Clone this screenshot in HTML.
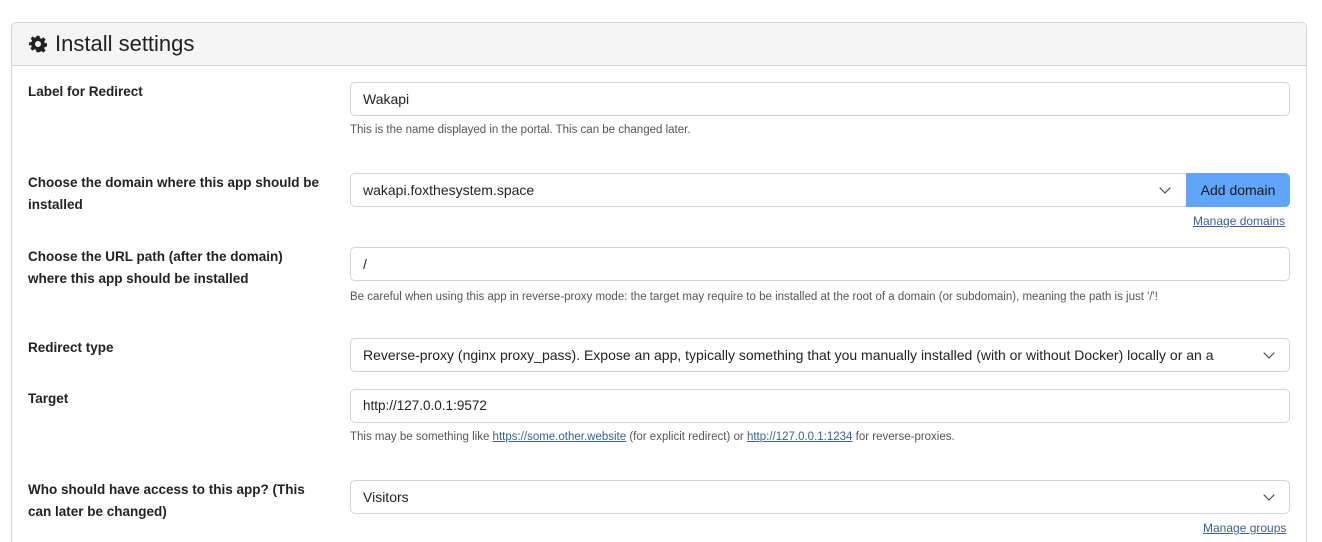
<!DOCTYPE html><html><head><style>
html,body{margin:0;width:1322px;height:542px;overflow:hidden}
body{background:#fff;font-family:"Liberation Sans",sans-serif;color:#222;position:relative}
.card{position:absolute;left:11px;top:22px;width:1294px;height:540px;border:1px solid #d4d4d4;border-bottom:none;border-radius:5px 5px 0 0}
.hd{position:absolute;left:0;top:0;right:0;height:42px;background:#f5f5f5;border-bottom:1px solid #d4d4d4;border-radius:5px 5px 0 0}
.hd span{position:absolute;left:43px;top:8px;font-size:22px;color:#222}
.a{position:absolute}
.lbl{position:absolute;left:28px;font-size:13.5px;font-weight:bold;line-height:22px;width:296px;color:#222}
.in{position:absolute;left:350px;width:940px;height:34px;border:1px solid #d4d4d4;border-radius:5px;font-size:14px;line-height:32px;padding-left:12px;box-sizing:border-box;white-space:nowrap;overflow:hidden;background:#fff}
.ch{position:absolute;top:0;width:30px;height:32px;background:#fff}
.ch:after{content:"";position:absolute;left:10px;top:10px;width:7px;height:7px;border-right:1.6px solid #333;border-bottom:1.6px solid #333;transform:rotate(45deg)}
.help{position:absolute;left:350px;font-size:11.5px;color:#555;white-space:nowrap}
.lnk{position:absolute;font-size:12px;color:#3b5f8f;text-decoration:underline}
a{color:#3b5f8f;text-decoration:underline}
</style></head><body>
<div class="card"><div class="hd">
<svg class="a" style="left:17px;top:12px" width="18" height="18" viewBox="0 0 24 24"><path fill="#222" d="M10 1h4l.6 3.2 2 .9 2.7-1.9 2.8 2.8-1.9 2.7.9 2 3.2.6v4l-3.2.6-.9 2 1.9 2.7-2.8 2.8-2.7-1.9-2 .9L14 23h-4l-.6-3.2-2-.9-2.7 1.9-2.8-2.8 1.9-2.7-.9-2L0 14v-4l3.2-.6.9-2L2.2 4.7 5 1.9l2.7 1.9 2-.9zM12 8a4 4 0 100 8 4 4 0 100-8z"/></svg>
<span>Install settings</span></div></div>
<div class="lbl" style="top:81px">Label for Redirect</div>
<div class="in" style="top:82px">Wakapi</div>
<div class="help" style="top:124px">This is the name displayed in the portal. This can be changed later.</div>
<div class="lbl" style="top:172px">Choose the domain where this app should be installed</div>
<div class="in" style="top:173px;width:837px;border-radius:5px 0 0 5px">wakapi.foxthesystem.space<div class="ch" style="left:800px"></div></div>
<div class="a" style="left:1186px;top:173px;width:104px;height:34px;background:#60a5fa;border-radius:0 5px 5px 0;font-size:14px;line-height:34px;text-align:center;color:#1a1a1a">Add domain</div>
<div class="lnk" style="left:1193px;top:214px">Manage domains</div>
<div class="lbl" style="top:246px">Choose the URL path (after the domain) where this app should be installed</div>
<div class="in" style="top:247px">/</div>
<div class="help" style="top:291px">Be careful when using this app in reverse-proxy mode: the target may require to be installed at the root of a domain (or subdomain), meaning the path is just '/'!</div>
<div class="lbl" style="top:337px">Redirect type</div>
<div class="in" style="top:338px">Reverse-proxy (nginx proxy_pass). Expose an app, typically something that you manually installed (with or without Docker) locally or an a<div class="ch" style="left:904px"></div></div>
<div class="lbl" style="top:388px">Target</div>
<div class="in" style="top:389px;font-size:13.5px">http://127.0.0.1:9572</div>
<div class="help" style="top:431px">This may be something like <a>https://some.other.website</a> (for explicit redirect) or <a>http://127.0.0.1:1234</a> for reverse-proxies.</div>
<div class="lbl" style="top:479px">Who should have access to this app? (This can later be changed)</div>
<div class="in" style="top:480px">Visitors<div class="ch" style="left:904px"></div></div>
<div class="lnk" style="left:1203px;top:521px">Manage groups</div>
</body></html>
